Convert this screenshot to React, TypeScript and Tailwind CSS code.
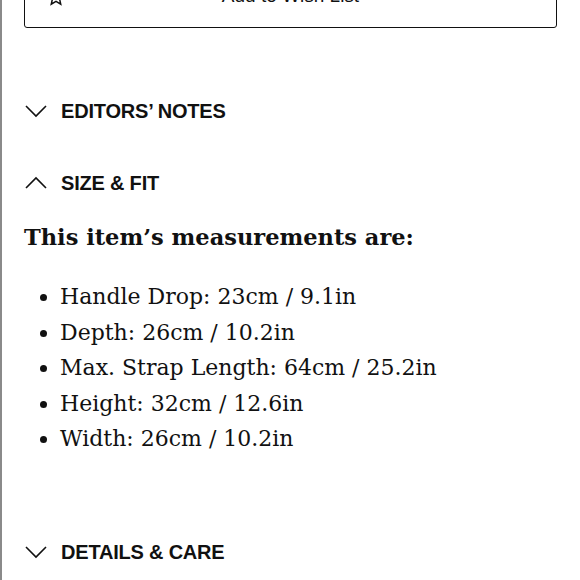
import React from 'react';

const Chevron = ({ up }: { up?: boolean }) => (
  <svg width="24" height="14" viewBox="0 0 24 14" fill="none" stroke="#111" strokeWidth="1.6">
    {up ? <path d="M2 12 L12 2 L22 12" /> : <path d="M2 2 L12 12 L22 2" />}
  </svg>
);

const Section = ({ title, up }: { title: string; up?: boolean }) => (
  <div className="flex items-center gap-[13px]">
    <Chevron up={up} />
    <span className="text-[20px] font-bold tracking-[-0.2px] text-[#111]" style={{ fontFamily: '"Liberation Sans", Arial, sans-serif' }}>
      {title}
    </span>
  </div>
);

const measurements = [
  'Handle Drop: 23cm / 9.1in',
  'Depth: 26cm / 10.2in',
  'Max. Strap Length: 64cm / 25.2in',
  'Height: 32cm / 12.6in',
  'Width: 26cm / 10.2in',
];

export default function App() {
  return (
    <div className="w-[580px] h-[580px] overflow-hidden bg-white flex">
      <div className="w-[2px] bg-[#8a8a8a] shrink-0" />
      <div className="flex-1 pl-[22px] pr-[23px]">
        <button className="w-full h-[58px] mt-[-30px] border-[1.5px] border-[#111] rounded-[3px] flex items-center px-[22px] text-[#111]">
          <svg width="18" height="18" viewBox="0 0 24 24" fill="none" stroke="#111" strokeWidth="2" className="mt-[-4px]">
            <path d="M12 2l3 7 7 .6-5.3 4.7 1.6 7.2L12 17.8 5.7 21.5l1.6-7.2L2 9.6 9 9z" />
          </svg>
          <span className="flex-1 text-center text-[19px] mr-[18px] mt-[-6px]" style={{ fontFamily: '"Liberation Sans", Arial, sans-serif' }}>
            Add to Wish List
          </span>
        </button>

        <div className="mt-[68px]">
          <Section title="EDITORS’ NOTES" />
        </div>
        <div className="mt-[42px]">
          <Section title="SIZE & FIT" up />
        </div>

        <div style={{ fontFamily: '"DejaVu Serif", Georgia, serif' }} className="text-[#111]">
          <h3 className="mt-[24px] text-[22.5px] font-bold leading-[30px]">This item’s measurements are:</h3>
          <ul className="mt-[27px] text-[22px] leading-[35.5px] list-disc pl-[36px]">
            {measurements.map((m) => (
              <li key={m}>{m}</li>
            ))}
          </ul>
        </div>

        <div className="mt-[80px]">
          <Section title="DETAILS & CARE" />
        </div>
      </div>
    </div>
  );
}
